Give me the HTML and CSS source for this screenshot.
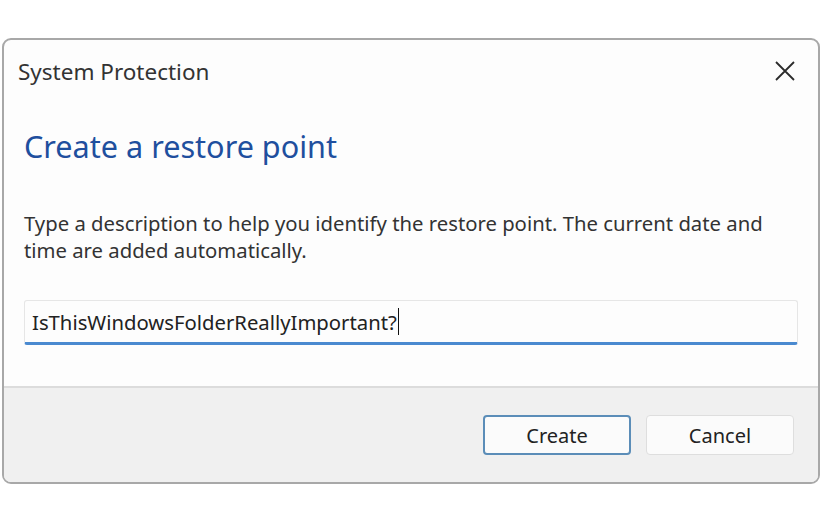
FILE: index.html
```html
<!DOCTYPE html>
<html>
<head>
<meta charset="utf-8">
<link rel="stylesheet" href="styles.css">
</head>
<body>
<div class="dialog">
  <div class="titlebar">
    <span class="title">System Protection</span>
    <span class="close">
      <svg width="22" height="22" viewBox="0 0 22 22"><path d="M2 2 L20 20 M20 2 L2 20" stroke="#2b2b2b" stroke-width="1.8" fill="none"/></svg>
    </span>
  </div>
  <div class="content">
    <h1 class="heading">Create a restore point</h1>
    <p class="desc">Type a description to help you identify the restore point. The current date and time are added automatically.</p>
    <div class="input"><span class="value">IsThisWindowsFolderReallyImportant?</span><span class="caret"></span></div>
  </div>
  <div class="footer">
    <button class="btn btn-default">Create</button>
    <button class="btn">Cancel</button>
  </div>
</div>
</body>
</html>
```
FILE: styles.css
```css
html, body {
  margin: 0;
  padding: 0;
  background: #ffffff;
}
body {
  font-family: "Noto Sans", "Open Sans", sans-serif;
  color: #222;
}
.dialog {
  margin: 38px 2px 0 2px;
  height: 446px;
  box-sizing: border-box;
  border: 2px solid #a8a8a8;
  border-radius: 9px;
  background: #fdfdfd;
  display: flex;
  flex-direction: column;
  overflow: hidden;
}
.titlebar {
  height: 62px;
  display: flex;
  align-items: center;
  justify-content: space-between;
  padding: 0 22px 0 14px;
}
.title {
  font-size: 22.5px;
  color: #333;
}
.close {
  display: flex;
  width: 22px;
  height: 22px;
}
.content {
  flex: 1;
  padding: 0 20px;
}
.heading {
  margin: 24px 0 0 0;
  font-weight: normal;
  font-size: 30.6px;
  line-height: 40px;
  color: #1f4f9e;
}
.desc {
  margin: 44px 0 0 0;
  font-size: 20.3px;
  line-height: 27px;
  color: #333;
}
.input {
  margin-top: 36px;
  height: 45px;
  box-sizing: border-box;
  border: 1px solid #e6e6e6;
  border-bottom: 3px solid #4a8ad0;
  border-radius: 3px;
  display: flex;
  align-items: center;
  padding: 0 0 0 7px;
  font-size: 20.3px;
  color: #222;
}
.caret {
  width: 1.5px;
  height: 27px;
  background: #111;
  margin-left: 1px;
}
.footer {
  height: 96px;
  box-sizing: border-box;
  background: #f0f0f0;
  border-top: 2px solid #dcdcdc;
  display: flex;
  align-items: center;
  justify-content: flex-end;
  gap: 15px;
  padding: 0 24px 0 0;
}
.btn {
  width: 148px;
  height: 40px;
  font-family: inherit;
  font-size: 20px;
  color: #222;
  background: #fbfbfb;
  border: 1px solid #dedede;
  border-radius: 4px;
  padding: 0;
}
.btn-default {
  border: 2px solid #5b8db8;
}
```
